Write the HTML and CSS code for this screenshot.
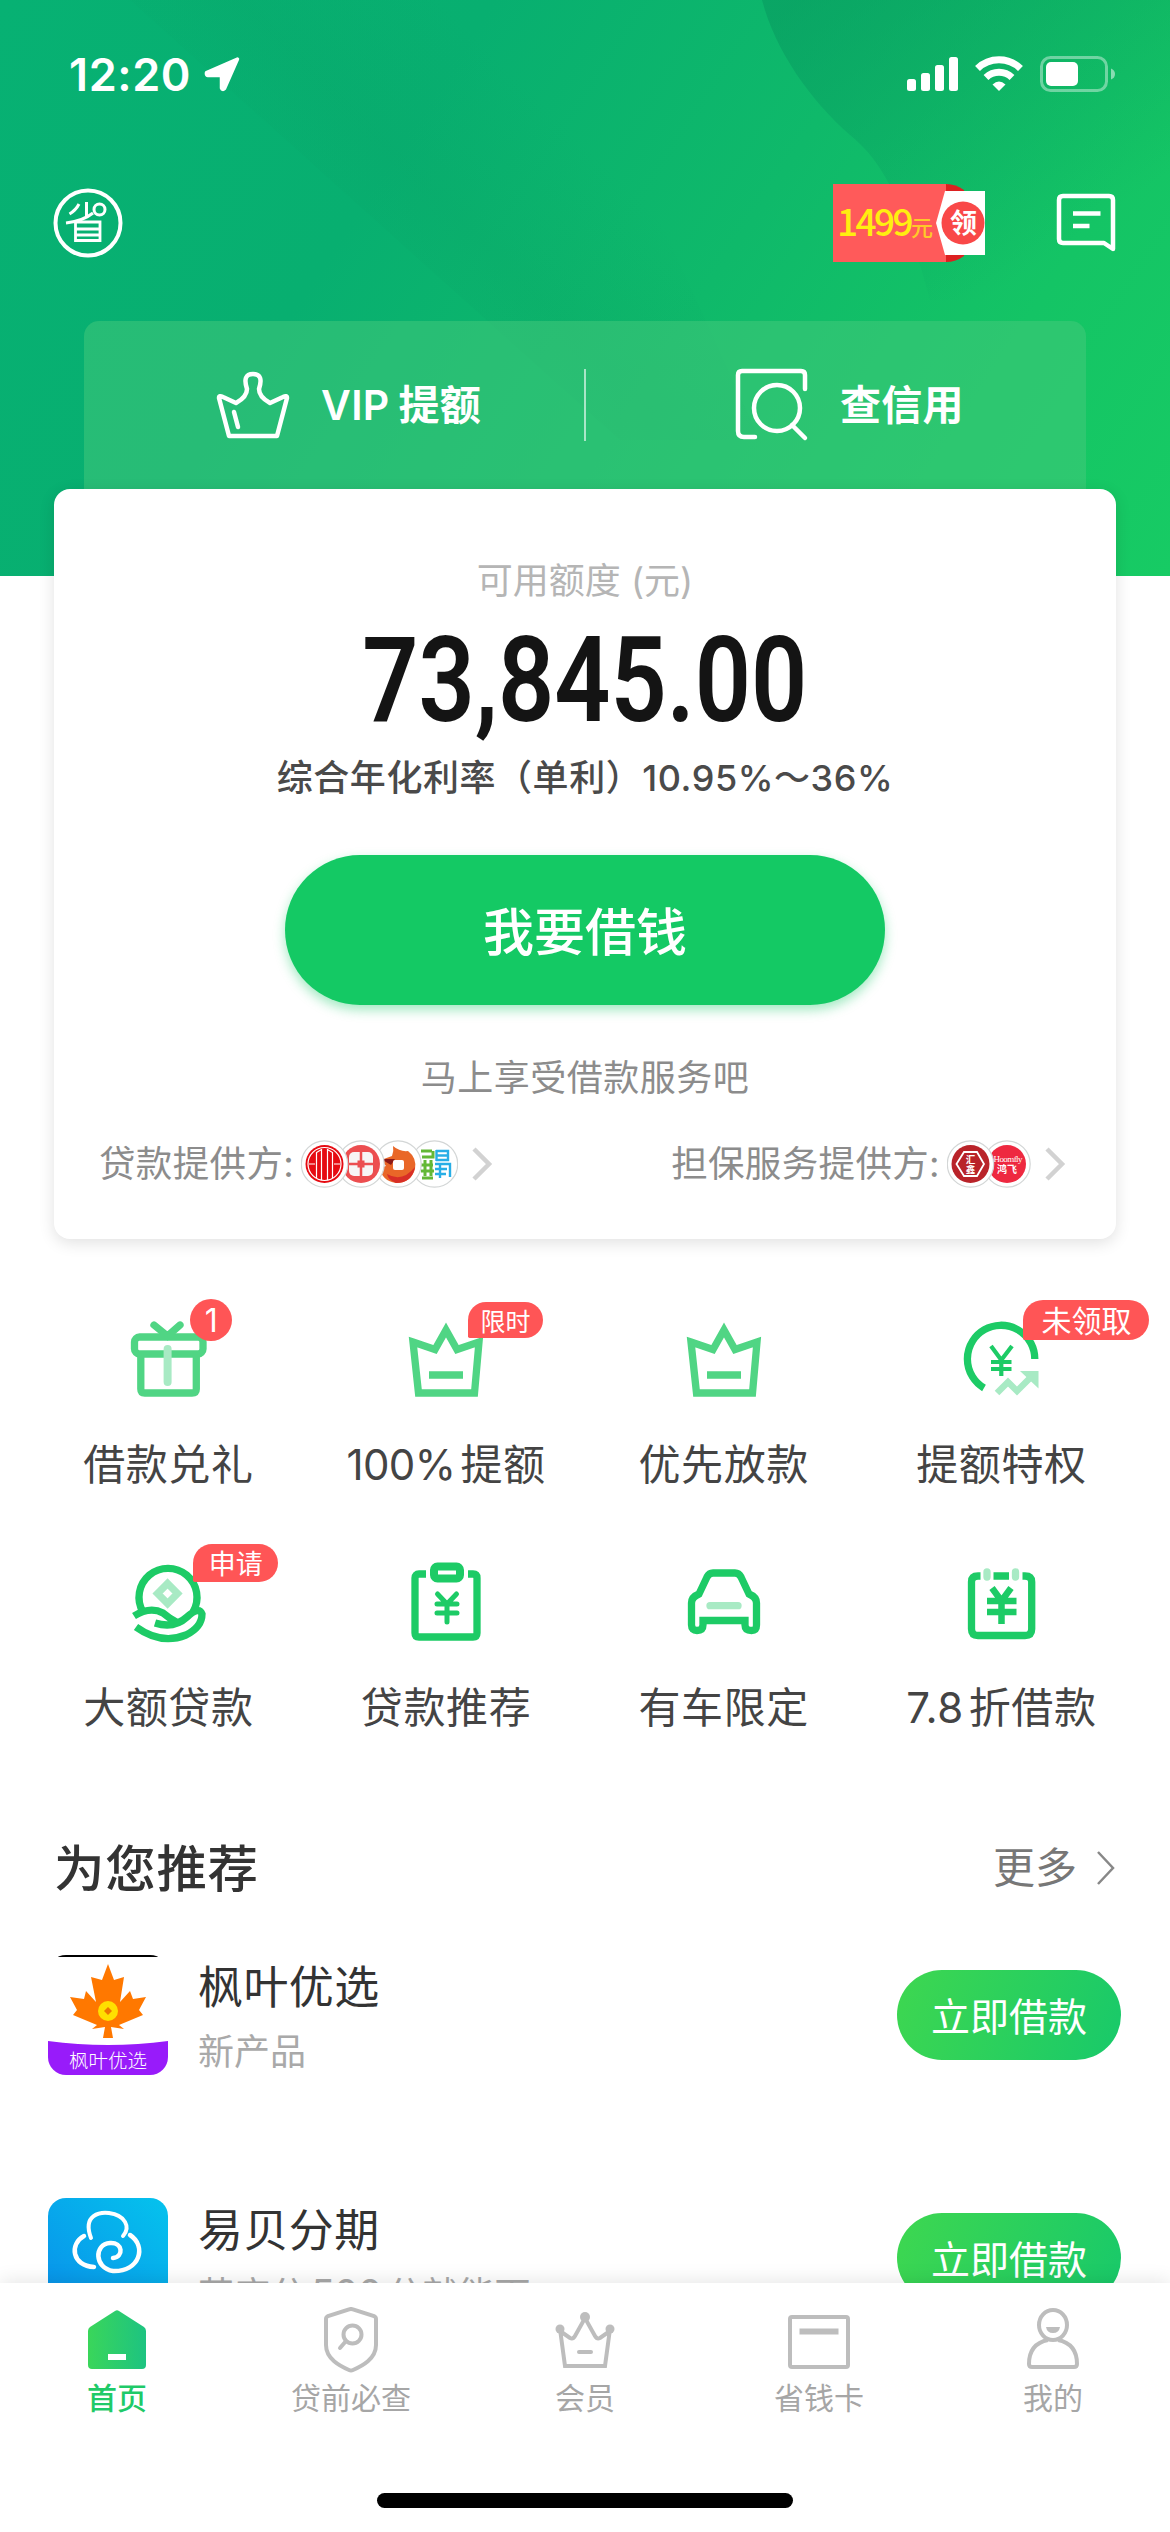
FILE: index.html
```html
<!DOCTYPE html>
<html lang="zh-CN">
<head>
<meta charset="utf-8">
<title>首页</title>
<link rel="stylesheet" href="styles.css">
</head>
<body>
<div class="phone">
  <main class="content">
    <header class="hero">
      <svg class="hero-art" viewBox="0 0 1170 576" width="1170" height="576">
        <defs>
          <linearGradient id="facetA" gradientUnits="userSpaceOnUse" x1="800" y1="0" x2="1000" y2="290"><stop offset="0" stop-color="#07985f" stop-opacity=".55"/><stop offset="1" stop-color="#07985f" stop-opacity="0"/></linearGradient>
          <linearGradient id="facetB" gradientUnits="userSpaceOnUse" x1="300" y1="260" x2="500" y2="60"><stop offset="0" stop-color="#0a9f64" stop-opacity="0"/><stop offset=".5" stop-color="#0a9f64" stop-opacity=".2"/><stop offset="1" stop-color="#0a9f64" stop-opacity="0"/></linearGradient>
        </defs>
        <path d="M762 0C775 50 810 100 850 135 880 160 900 190 930 300H1170V0Z" fill="url(#facetA)"/>
        <path d="M130 0 620 440 760 440 560 0Z" fill="url(#facetB)"/>
      </svg>
      <div class="status">
        <span class="clock">12:20</span>
        <svg class="loc" viewBox="0 0 38 36" width="38" height="36"><path d="M34.500 3 3.500 16.500Q3 19 5 19.500H17.500Q18.500 19.500 18.500 21V32Q19.500 34.500 21.500 32.500Z" fill="#fff" stroke="#fff" stroke-width="3.500" stroke-linejoin="round"/></svg>
        <svg class="signal" viewBox="0 0 210 38" width="210" height="38">
          <g fill="#fff"><rect x="0" y="24" width="9" height="12" rx="2.500"/><rect x="14" y="18" width="9" height="18" rx="2.500"/><rect x="28" y="10" width="9" height="26" rx="2.500"/><rect x="42" y="2" width="9" height="34" rx="2.500"/></g>
          <g fill="none" stroke="#fff" stroke-width="7"><path d="M70.500 13.500A31 31 0 0 1 113.500 13.500"/><path d="M79 22.500A19 19 0 0 1 105 22.500"/></g>
          <path d="M92 36 85.500 29.500Q92 23.500 98.500 29.500Z" fill="#fff"/>
          <rect x="134.500" y="2.500" width="65" height="33" rx="9" fill="none" stroke="#fff" stroke-opacity=".4" stroke-width="3"/>
          <rect x="139" y="7" width="32" height="24" rx="5" fill="#fff"/>
          <path d="M204 13.500Q208 15 208 19T204 24.500Z" fill="#fff" fill-opacity=".5"/>
        </svg>
      </div>
      <div class="toolbar">
        <svg viewBox="0 0 70 70" width="70" height="70" fill="none" stroke="#fff">
          <circle cx="35" cy="35" r="32.500" stroke-width="4"/>
          <path d="M16.500 26Q23 22 26 16M33.500 14V28M13 35Q30 33 40 25" stroke-width="3"/>
          <circle cx="46.500" cy="21.500" r="5.500" stroke-width="3"/>
          <path d="M22.500 34H47V52.500H22.500ZM22.500 41H47M22.500 47H47" stroke-width="2.800"/>
        </svg>
        <div class="coupon">
          <span class="coupon-text">1499<small>元</small></span>
          <svg class="coupon-flap" viewBox="0 0 50 78" width="50" height="78">
            <path d="M10 0Q20 0 28 6V72Q20 78 10 78Z" fill="#dc2020"/>
            <path d="M9 7H49V71H9L0 39Z" fill="#fff"/>
            <circle cx="27" cy="39" r="21.500" fill="#f94848"/>
          </svg>
          <span class="coupon-get">领</span>
        </div>
        <svg viewBox="0 0 62 60" width="62" height="60" fill="none" stroke="#fff">
          <path d="M8 3H54Q58 3 58 7V56L49 50H8Q4 50 4 46V7Q4 3 8 3Z" stroke-width="4.500" stroke-linejoin="round"/>
          <path d="M18 20.500H45.500M18 33H34.500" stroke-width="4.500"/>
        </svg>
      </div>
      <div class="panel">
        <div class="panel-item">
          <svg viewBox="0 0 74 74" width="74" height="74" fill="none" stroke="#fff" stroke-width="4.500" stroke-linejoin="round" stroke-linecap="round">
            <path d="M13 68 3 30Q3 27 7 29L20 35Q31 29 31 21Q26 6 37 6T43 21Q43 29 54 35L67 29Q71 27 71 30L61 68Z"/><path d="M18 44 22 59"/>
          </svg>
          <span>VIP<i class="sp wide"></i>提额</span>
        </div>
        <i class="rule"></i>
        <div class="panel-item">
          <svg viewBox="0 0 74 74" width="74" height="74" fill="none" stroke="#fff" stroke-width="4.500" stroke-linejoin="round" stroke-linecap="round">
            <path d="M70 21V7Q70 3 66 3H7Q3 3 3 7V63Q3 69 9 69H20"/><circle cx="42" cy="40" r="23"/><path d="M57 57 70 70"/>
          </svg>
          <span>查信用</span>
        </div>
      </div>
    </header>

    <section class="card">
      <p class="quota-label">可用额度 (元)</p>
      <p class="quota"><span>73,845.00</span></p>
      <p class="rate">综合年化利率（单利）10.95%～36%</p>
      <button class="borrow">我要借钱</button>
      <p class="hint">马上享受借款服务吧</p>
      <div class="providers">
        <div class="provider">
          <span>贷款提供方:</span>
          <svg viewBox="0 0 157 48" width="157" height="48">
            <circle cx="133.500" cy="24" r="23.200" fill="#fff" stroke="#d3d6d6" stroke-width="1.200"/>
            <g fill="none" stroke-width="3"><path d="M120 11H131M121 17H132V11M120 25H132M124 20V36M130 20V36M120 31H133M121 38H132" stroke="#63b836"/><path d="M135.500 10V21M135 11H147V20H135M135 15.500H147M134 24H149V37M134 29H146M134 34H145M139 24V38" stroke="#28aee6" stroke-width="2.400"/></g>
            <circle cx="97" cy="24" r="23.200" fill="#fff" stroke="#d3d6d6" stroke-width="1.200"/>
            <path d="M80 20 91 16Q93 11 92 6Q99 12 107 11Q116 18 114 29Q110 43 95 43Q81 41 79 28L85 26Z" fill="#e96728"/><path d="M86 34Q101 43 114 27Q111 43 95 43Q87 40 86 34Z" fill="#d82e27"/><path d="M80 19H94L90 25Z" fill="#8c1a18"/><rect x="92" y="20" width="11" height="10" rx="2" fill="#fff"/>
            <circle cx="60" cy="24" r="23.200" fill="#fff" stroke="#d3d6d6" stroke-width="1.200"/>
            <circle cx="60" cy="24" r="19" fill="#ec4e50"/><rect x="48" y="12" width="24" height="24" rx="5" fill="#f7f5f5"/><path d="M60 12V36M48 24H72" stroke="#ec4e50" stroke-width="2.500"/><rect x="56.500" y="20.500" width="7" height="7" fill="#ec4e50"/>
            <circle cx="23.500" cy="24" r="23.200" fill="#fff" stroke="#d3d6d6" stroke-width="1.200"/>
            <circle cx="23.500" cy="24" r="19" fill="#e60b12"/><g fill="none" stroke="#fff" stroke-width="1.200"><circle cx="23.500" cy="24" r="16.500"/><path d="M15.500 38V12.500L20.500 9.500V40M26.500 40V9.500L31.500 12.500V38M8 24H14M33 24H39"/></g>
          </svg>
          <svg class="chev" viewBox="0 0 22 36" width="22" height="36"><path d="M3 3 18 18 3 33" fill="none" stroke="#d2d2d2" stroke-width="4.500"/></svg>
        </div>
        <div class="provider">
          <span>担保服务提供方:</span>
          <svg viewBox="0 0 84 48" width="84" height="48">
            <circle cx="60" cy="24" r="23.200" fill="#fff" stroke="#d3d6d6" stroke-width="1.200"/><circle cx="60" cy="24" r="19" fill="#ee2940"/>
            <text class="logo-serif" x="61" y="22" font-size="9" textLength="29">Hoomfly</text><text class="logo-cn" x="60" y="33" font-size="10">鸿飞</text>
            <circle cx="23.500" cy="24" r="23.200" fill="#fff" stroke="#d3d6d6" stroke-width="1.200"/><circle cx="23.500" cy="24" r="19" fill="#b92329"/>
            <path d="M17 12H30L37 24 30 36H17L9.500 24Z" fill="none" stroke="#fff" stroke-width="1.800"/>
            <text class="logo-cn" x="23.500" y="23" font-size="9.500">汇</text><text class="logo-cn" x="23.500" y="33" font-size="9.500">鑫</text>
          </svg>
          <svg class="chev" viewBox="0 0 22 36" width="22" height="36"><path d="M3 3 18 18 3 33" fill="none" stroke="#d2d2d2" stroke-width="4.500"/></svg>
        </div>
      </div>
    </section>

    <nav class="grid">
      <a class="tile">
        <svg class="soft" viewBox="0 0 84 84" width="84" height="84"><path d="M28 8 41.500 19 54 8" stroke-linecap="round"/><rect x="8.500" y="20" width="68.500" height="17" rx="5"/><path d="M14.800 38V72Q14.800 76 18.800 76H66Q70.300 76 70.300 72V38"/><path class="pale" d="M41.600 32V65" stroke-width="8" stroke-linecap="round"/></svg>
        <span>借款兑礼</span><b class="badge one">1</b>
      </a>
      <a class="tile">
        <svg class="soft" viewBox="0 0 84 84" width="84" height="84"><path d="M9 25 31 32.500 42 13 53 32.500 75 25 70.500 76H14.500ZM25 58H59"/></svg>
        <span><em>100%</em><i class="sp"></i>提额</span><b class="badge timed">限时</b>
      </a>
      <a class="tile">
        <svg class="soft" viewBox="0 0 84 84" width="84" height="84"><path d="M9 25 31 32.500 42 13 53 32.500 75 25 70.500 76H14.500ZM25 58H59"/></svg>
        <span>优先放款</span>
      </a>
      <a class="tile">
        <svg viewBox="0 0 84 84" width="84" height="84"><path d="M75.800 42A33.700 33.700 0 1 0 25 71"/><path d="M32 29 42.300 43 53 29M42.300 42V59M32 45H52.500M32 52H52.500" stroke-width="4.200"/><path class="pale" d="M38 76 49 65 58 74 71 61" stroke-width="6.500"/><path class="pale-fill" d="M61 54H79.500V71.500Z"/></svg>
        <span>提额特权</span><b class="badge unclaimed">未领取</b>
      </a>
      <a class="tile">
        <svg viewBox="0 0 84 84" width="84" height="84"><path d="M17 52A29 29 0 1 1 67 52"/><path class="pale" d="M41.600 23.500 51.500 33.500 41.600 43.500 31.600 33.500Z"/><path d="M8 56Q24 46 37 53Q44 59 52 63"/><path d="M29 63Q48 69 61 57Q73 46 76 54Q76 67 60 75Q35 85 10 67"/></svg>
        <span>大额贷款</span><b class="badge apply">申请</b>
      </a>
      <a class="tile">
        <svg viewBox="0 0 84 84" width="84" height="84"><path d="M22 14H15Q11 14 11 18V73Q11 77 15 77H69Q73 77 73 73V18Q73 14 69 14H64"/><rect x="30" y="6.500" width="26" height="12" rx="3.500" stroke-width="8"/><path d="M33.500 34 43 44 52.500 34M43 44V62M33 44H53M33 53H53" stroke-width="5" stroke-linecap="round"/></svg>
        <span>贷款推荐</span>
      </a>
      <a class="tile">
        <svg viewBox="0 0 84 84" width="84" height="84"><path d="M31 13H53Q57 13 59 17L67 34Q74.500 37 74.500 43V65Q74.500 70.500 69.500 70.500Q63 70.500 63 65V60.500H21V65Q21 70.500 15 70.500Q9.500 70.500 9.500 65V43Q9.500 37 17 34L25 17Q27 13 31 13Z"/><path class="pale" d="M28 45.700H56" stroke-linecap="round"/></svg>
        <span>有车限定</span>
      </a>
      <a class="tile">
        <svg viewBox="0 0 84 84" width="84" height="84"><path d="M21.500 16H19Q12.500 16 12.500 22V69Q12.500 75.500 19 75.500H66Q72.700 75.500 72.700 69V22Q72.700 16 66 16H63.500M34.500 16H50"/><path class="pale" d="M28 12V17M56.500 12V17" stroke-linecap="round"/><path d="M33 28 42.500 41 52 28M42.500 40V64M28 41H57.500M28 52H57.500" stroke-width="6.500"/></svg>
        <span>7.8<i class="sp"></i>折借款</span>
      </a>
    </nav>

    <section class="recommend">
      <div class="section-head"><h2>为您推荐</h2><a class="more">更多<svg viewBox="0 0 20 36" width="20" height="36"><path d="M2 2 17 18 2 34" fill="none" stroke="#888" stroke-width="2.500"/></svg></a></div>
      <article class="offer">
        <svg class="logo" viewBox="0 0 120 120" width="120" height="120">
          <clipPath id="round"><rect width="120" height="120" rx="18"/></clipPath>
          <g clip-path="url(#round)"><rect width="120" height="120" fill="#fff"/><rect width="120" height="2" fill="#000"/><path d="M0 86Q60 94 120 86V120H0Z" fill="#981bfa"/></g>
          <path d="M60 9 66 25 76 22 72 47 82 36 85 44 98 42 91 55 95 60 71 70 76 74 63 72 65 83H55L57 72 44 74 49 70 25 60 29 55 22 42 36 44 38 36 48 47 43 22 54 25Z" fill="#ff7800"/>
          <circle cx="60" cy="56" r="10" fill="#ffdf00"/><path d="M60 52 64 56 60 60 56 56Z" fill="#ee7700"/>
          <text x="60" y="112.500">枫叶优选</text>
        </svg>
        <div class="offer-text"><h3>枫叶优选</h3><p>新产品</p></div>
        <button class="apply-btn">立即借款</button>
      </article>
      <article class="offer">
        <svg class="logo" viewBox="0 0 120 120" width="120" height="120">
          <defs><linearGradient id="sky" x1="0" y1="1" x2="1" y2="0"><stop offset="0" stop-color="#098eea"/><stop offset="1" stop-color="#05c3ed"/></linearGradient></defs>
          <rect width="120" height="120" rx="18" fill="url(#sky)"/>
          <g fill="none" stroke="#fff" stroke-linecap="round"><path d="M43 40C34 16 53 14 61 15C77 17 83 29 75 38" stroke-width="4"/><path d="M36 38C21 46 24 68 46 69" stroke-width="4.500"/><path d="M82 37C99 48 92 74 65 73C46 70 46 46 62 45C75 44 76 59 65 60" stroke-width="4.500"/></g>
        </svg>
        <div class="offer-text"><h3>易贝分期</h3><p>芝麻分<span class="score">500</span>分就能下</p></div>
        <button class="apply-btn">立即借款</button>
      </article>
    </section>
  </main>

  <footer class="tabbar">
    <div class="tabs">
      <a class="tab active"><svg viewBox="0 0 66 66" width="66" height="66"><defs><linearGradient id="home" x1="0" x2="1"><stop offset="0" stop-color="#3ad65a"/><stop offset="1" stop-color="#1dc381"/></linearGradient></defs><path d="M31 4Q33 2.500 35 4L60 20Q62 21.500 62 24V58Q62 62 58 62H8Q4 62 4 58V24Q4 21.500 6 20Z" fill="url(#home)"/><rect x="24" y="47" width="18" height="6" fill="#fff"/></svg><span>首页</span></a>
      <a class="tab"><svg viewBox="0 0 66 66" width="66" height="66"><path d="M31 2.500Q33 1.500 35 2.500L56 9Q58 10 58 12V38C58 52 44 59 35 63Q33 64 31 63C22 59 8 52 8 38V12Q8 10 10 9Z"/><circle cx="34.500" cy="27.500" r="9"/><path d="M28 34 22 41" stroke-linecap="round"/></svg><span>贷前必查</span></a>
      <a class="tab"><svg viewBox="0 0 66 66" width="66" height="66"><path d="M8 22 13 59H53L58 22M8 24 18 31Q21 32.500 23 29L33 11 43 29Q45 32.500 48 31L58 24M27 45H39" stroke-linecap="round"/><g fill="#bdbdbd" stroke="none"><circle cx="8" cy="22" r="4.500"/><circle cx="33" cy="10" r="5"/><circle cx="58" cy="22" r="4.500"/></g></svg><span>会员</span></a>
      <a class="tab"><svg viewBox="0 0 66 66" width="66" height="66"><rect x="4" y="10" width="58" height="50" rx="2"/><path d="M13.500 24.500H52.500" stroke-width="6"/></svg><span>省钱卡</span></a>
      <a class="tab"><svg viewBox="0 0 66 66" width="66" height="66"><ellipse cx="33" cy="18" rx="14" ry="15"/><path d="M28 33C13 36 9 46 9 57Q9 60 12 60H54Q57 60 57 57C57 46 53 36 38 33"/><path d="M26 20H40Q39 26 33 26T26 20Z" fill="#bdbdbd" stroke="none"/></svg><span>我的</span></a>
    </div>
    <div class="home-indicator"></div>
  </footer>
</div>
</body>
</html>
```
FILE: styles.css
```css
* { box-sizing: border-box; margin: 0; padding: 0; }
body { width: 1170px; height: 2532px; overflow: hidden; background: #fff; font-family: Inter, "Noto Sans CJK SC", sans-serif; color: #333; }
svg { display: block; flex: none; }
button { border: 0; font-family: inherit; color: #fff; }
i, em { font-style: normal; }
.phone { display: flex; flex-direction: column; width: 1170px; height: 2532px; }
.content { flex: 1; min-height: 0; overflow: hidden; }

.hero { position: relative; height: 576px; background: linear-gradient(123deg, #07b173 0%, #08af70 32%, #0fb96a 58%, #14c465 80%, #17cb64 100%); }
.hero-art { position: absolute; left: 0; top: 0; }
.hero > div { position: relative; }
.status { display: flex; align-items: center; height: 150px; padding: 0 53px 0 69px; }
.clock { width: 134px; font-size: 45px; font-weight: 600; line-height: 54px; letter-spacing: .6px; color: #fff; white-space: nowrap; }
.signal { margin-left: auto; }
.loc, .signal { margin-top: -2px; }
.toolbar { display: flex; align-items: center; height: 146px; padding: 0 53px 0 53px; }
.coupon { position: relative; display: flex; align-items: center; width: 153px; height: 78px; margin: 0 69px 0 auto; background: linear-gradient(90deg, #ff5a5a 115px, transparent 115px); }
.coupon-text { padding-left: 4px; font: 500 37px/78px "Noto Sans CJK SC", sans-serif; letter-spacing: -2.6px; color: #ffee10; white-space: nowrap; }
.coupon-text small { font-size: 22px; color: #ffc928; }
.coupon-flap { position: absolute; right: 0; top: 0; }
.coupon-get { position: absolute; right: 9px; top: 0; font: 700 27px/76px "Noto Sans CJK SC", sans-serif; color: #fff; }
.panel { display: flex; align-items: center; width: 1002px; height: 168px; margin: 25px auto 0; border-radius: 15px 15px 0 0; background: rgba(70, 202, 124, .5); color: #fff; }
.panel-item { display: flex; flex: 0 0 500px; align-items: center; gap: 31px; padding-left: 132px; font-size: 41px; font-weight: 600; letter-spacing: .3px; white-space: nowrap; }
.panel-item span { line-height: 60px; }
.rule + .panel-item { padding-left: 149px; }
.rule { width: 2px; height: 72px; background: rgba(255, 255, 255, .6); }

.card { position: relative; display: flex; flex-direction: column; align-items: center; width: 1062px; height: 750px; margin: -87px auto 0; padding-top: 62px; border-radius: 16px; background: #fff; box-shadow: 0 4px 16px rgba(0, 0, 0, .12); }
.quota-label { font-size: 36px; line-height: 60px; color: #b5b5b5; }
.quota { height: 110px; margin-top: 15px; font: 600 119px/110px Roboto, sans-serif; color: #141414; }
.quota span { display: block; transform: scaleX(.828); }
.rate { margin-top: 17px; font-size: 36px; line-height: 50px; font-weight: 500; letter-spacing: .55px; color: #4a4a4a; white-space: nowrap; }
.borrow { width: 600px; height: 150px; margin-top: 52px; padding-bottom: 3px; border-radius: 75px; background: #14c964; font-size: 51px; font-weight: 500; box-shadow: 0 5px 12px rgba(20, 201, 100, .4); }
.hint { margin-top: 48px; font-size: 36px; line-height: 50px; color: #8c8c8c; letter-spacing: .5px; }
.providers { display: flex; justify-content: space-between; align-self: stretch; margin-top: 36px; padding: 0 50px 0 45px; }
.provider { display: flex; align-items: center; height: 50px; font-size: 36.500px; letter-spacing: .35px; color: #8c8c8c; white-space: nowrap; }
.provider span { line-height: 50px; margin-right: 7px; }
.provider .chev { margin-left: 13px; }
.logo-serif, .logo-cn { fill: #fff; text-anchor: middle; letter-spacing: 0; }
.logo-serif { font-family: "Liberation Serif", serif; }
.logo-cn { font-family: "Noto Sans CJK SC", sans-serif; font-weight: 700; }

.grid { display: grid; grid-template-columns: repeat(4, 277.700px); grid-auto-rows: 243px; width: 1111px; margin: 78px auto 0; }
.tile { position: relative; display: flex; flex-direction: column; align-items: center; color: #444; }
.tile svg { fill: none; stroke: #1dcb66; stroke-width: 7.300; }
.tile svg.soft { stroke: #50d584; }
.tile .pale { stroke: #a8eac4; }
.tile .pale-fill { fill: #a8eac4; stroke: none; }
.tile span { margin-top: 34px; font-size: 42px; line-height: 60px; letter-spacing: .6px; white-space: nowrap; }
.tile em { letter-spacing: -.6px; }
.sp { display: inline-block; width: 5px; }
.sp.wide { width: 9px; }
.badge { position: absolute; left: calc(50% + 22px); display: flex; align-items: center; justify-content: center; border-radius: 21px 21px 21px 2px; background: #ff5556; color: #fff; font-weight: 400; white-space: nowrap; }
.one { top: -18px; width: 42px; height: 42px; border-radius: 50%; font-size: 32px; }
.timed { top: -15px; width: 75px; height: 36px; padding-bottom: 1px; font-size: 25px; }
.unclaimed { top: -17px; width: 126px; height: 40px; padding-bottom: 2px; font-size: 30px; }
.apply { left: calc(50% + 25px); top: -16px; width: 85px; height: 38px; padding-bottom: 2px; font-size: 27px; }

.section-head { display: flex; align-items: center; justify-content: space-between; height: 60px; margin-top: 35px; padding: 0 54px; }
.section-head h2 { padding-top: 2px; font-size: 50.500px; line-height: 60px; font-weight: 500; letter-spacing: .7px; }
.more { display: flex; align-items: center; gap: 19px; font-size: 42px; line-height: 60px; color: #777; }
.offer { display: flex; align-items: flex-start; height: 243px; padding: 0 49px 0 48px; }
.recommend .section-head + .offer { margin-top: 57px; }
.logo text { font: 300 19.500px "Noto Sans CJK SC", sans-serif; fill: #fff; text-anchor: middle; }
.offer-text { flex: 1; margin-left: 30px; }
.offer-text h3 { padding-top: 1px; font-size: 45px; line-height: 64px; font-weight: 400; letter-spacing: .4px; }
.offer-text p { margin-top: 7px; font-size: 36px; line-height: 50px; color: #a9a9a9; }
.score { margin: 0 5px; font-size: 39px; line-height: 0; letter-spacing: -.8px; }
.apply-btn { width: 224px; height: 90px; margin-top: 15px; padding-bottom: 3px; border-radius: 45px; background: linear-gradient(110deg, #3ed750, #18c96a); font-size: 39px; }

.tabbar { position: relative; height: 249px; background: #fff; box-shadow: 0 -2px 18px rgba(0, 0, 0, .1); }
.tabs { display: grid; grid-template-columns: repeat(5, 234px); padding-top: 24px; }
.tab { display: flex; flex-direction: column; align-items: center; font-size: 30px; color: #a6a6a6; }
.tab svg { fill: none; stroke: #bdbdbd; stroke-width: 4; }
.tab.active svg { stroke: none; }
.tab span { margin-top: 5px; line-height: 40px; }
.tab.active { color: #1fca68; font-weight: 500; }
.home-indicator { width: 416px; height: 15px; margin: 75px auto 0; border-radius: 8px; background: #000; }
```
